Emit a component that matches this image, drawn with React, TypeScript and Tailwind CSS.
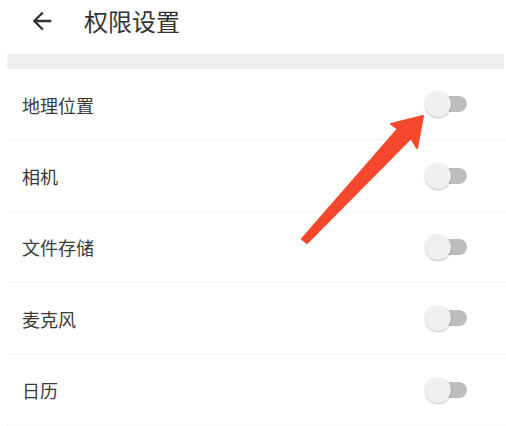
import React from "react";

const items = ["地理位置", "相机", "文件存储", "麦克风", "日历"];

const Toggle = () => (
  <div className="relative w-[42px] h-[28px] flex items-center">
    {/* track */}
    <div className="absolute left-[6px] right-0 h-[16px] rounded-full bg-[#bdbdbd]" />
    {/* thumb */}
    <div className="absolute left-0 w-[26px] h-[26px] rounded-full bg-[#efefef] shadow-[0_1px_2px_rgba(0,0,0,0.25)]" />
  </div>
);

const App = () => {
  return (
    <div
      className="relative w-[506px] h-[426px] bg-white overflow-hidden"
      style={{ fontFamily: '"Noto Sans CJK SC", "Noto Sans", sans-serif' }}
    >
      {/* header */}
      <header className="h-[54px] pb-[13px] flex items-center">
        <svg
          width="28"
          height="28"
          viewBox="0 0 24 24"
          className="ml-[28px] fill-[#333333]"
        >
          <path d="M20 11H7.83l5.59-5.59L12 4l-8 8 8 8 1.41-1.41L7.83 13H20v-2z" />
        </svg>
        <h1 className="ml-[28px] text-[24px] leading-none text-[#333333]">
          权限设置
        </h1>
      </header>

      {/* gray separator */}
      <div className="ml-[7px] mr-[2px] h-[15px] bg-[#efefef]" />

      {/* permission list */}
      <ul className="ml-[7px]">
        {items.map((name) => (
          <li
            key={name}
            className="h-[71.4px] flex items-center justify-between border-b border-[#f3f3f3] pl-[15px] pr-[39px]"
          >
            <span className="pt-[2px] text-[18px] text-[#3a3a3a]">{name}</span>
            <Toggle />
          </li>
        ))}
      </ul>

      {/* red annotation arrow */}
      <svg
        className="absolute left-0 top-0 pointer-events-none"
        width="506"
        height="426"
        viewBox="0 0 506 426"
      >
        <polygon
          points="423,116 417,148 411,138 307,243 302,239 398,129 391,124"
          fill="#f4472b"
          stroke="#f4472b"
          strokeWidth="2"
          strokeLinejoin="round"
        />
      </svg>
    </div>
  );
};

export default App;
